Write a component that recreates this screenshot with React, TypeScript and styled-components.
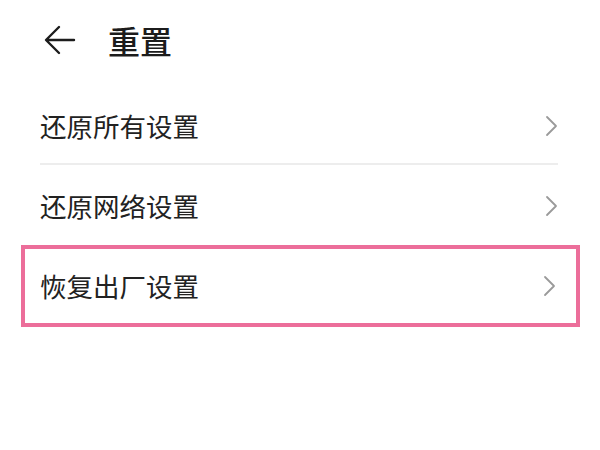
import React from 'react';
import styled, { createGlobalStyle } from 'styled-components';

const GlobalStyle = createGlobalStyle`
  body {
    margin: 0;
    background: #fff;
    font-family: "Noto Sans CJK SC", "Noto Sans", sans-serif;
    color: #1c1c1c;
  }
`;

const Page = styled.div`
  width: 600px;
  height: 450px;
  background: #fff;
`;

const Header = styled.div`
  display: flex;
  align-items: center;
  height: 80px;
  padding-left: 44px;
`;

const BackButton = styled.button`
  display: flex;
  align-items: center;
  justify-content: center;
  width: 32px;
  height: 32px;
  padding: 0;
  border: 0;
  background: none;
  color: #1c1c1c;
`;

const Title = styled.h1`
  margin: 0 0 0 32px;
  font-size: 32px;
  font-weight: 500;
  line-height: 1;
`;

const List = styled.div`
  display: flex;
  flex-direction: column;
  margin-top: 6px;
  padding: 0 20px 0 21px;
`;

const Row = styled.div<{ $highlight?: boolean; $divider?: boolean }>`
  position: relative;
  display: flex;
  align-items: center;
  justify-content: space-between;
  height: 80px;
  box-sizing: border-box;
  padding: 0 22px 0 19px;
  font-size: 26.5px;
  color: #222;

  ${({ $divider }) =>
    $divider &&
    `
    &::after {
      content: '';
      position: absolute;
      left: 19px;
      right: 22px;
      bottom: 1px;
      height: 2px;
      background: #ededed;
    }
  `}

  ${({ $highlight }) =>
    $highlight &&
    `
    border: 4px solid #ec6e9a;
    padding: 0 20px 0 15px;
    margin-top: -1px;
    height: 82px;
  `}
`;

const Label = styled.span`
  line-height: 1;
`;

function Chevron() {
  return (
    <svg width="14" height="22" viewBox="0 0 14 22" fill="none">
      <path d="M3 2l9 9-9 9" stroke="#9a9a9a" strokeWidth="1.8" strokeLinecap="round" strokeLinejoin="round" />
    </svg>
  );
}

export default function App() {
  const items = ['还原所有设置', '还原网络设置', '恢复出厂设置'];
  return (
    <Page>
      <GlobalStyle />
      <Header>
        <BackButton aria-label="back">
          <svg width="32" height="32" viewBox="0 0 32 32" fill="none">
            <path d="M30 16H3M15 3L2 16l13 13" stroke="#1c1c1c" strokeWidth="2.4" strokeLinecap="round" strokeLinejoin="round" />
          </svg>
        </BackButton>
        <Title>重置</Title>
      </Header>
      <List>
        {items.map((t, i) => (
          <Row key={t} $divider={i === 0} $highlight={i === 2}>
            <Label>{t}</Label>
            <Chevron />
          </Row>
        ))}
      </List>
    </Page>
  );
}
